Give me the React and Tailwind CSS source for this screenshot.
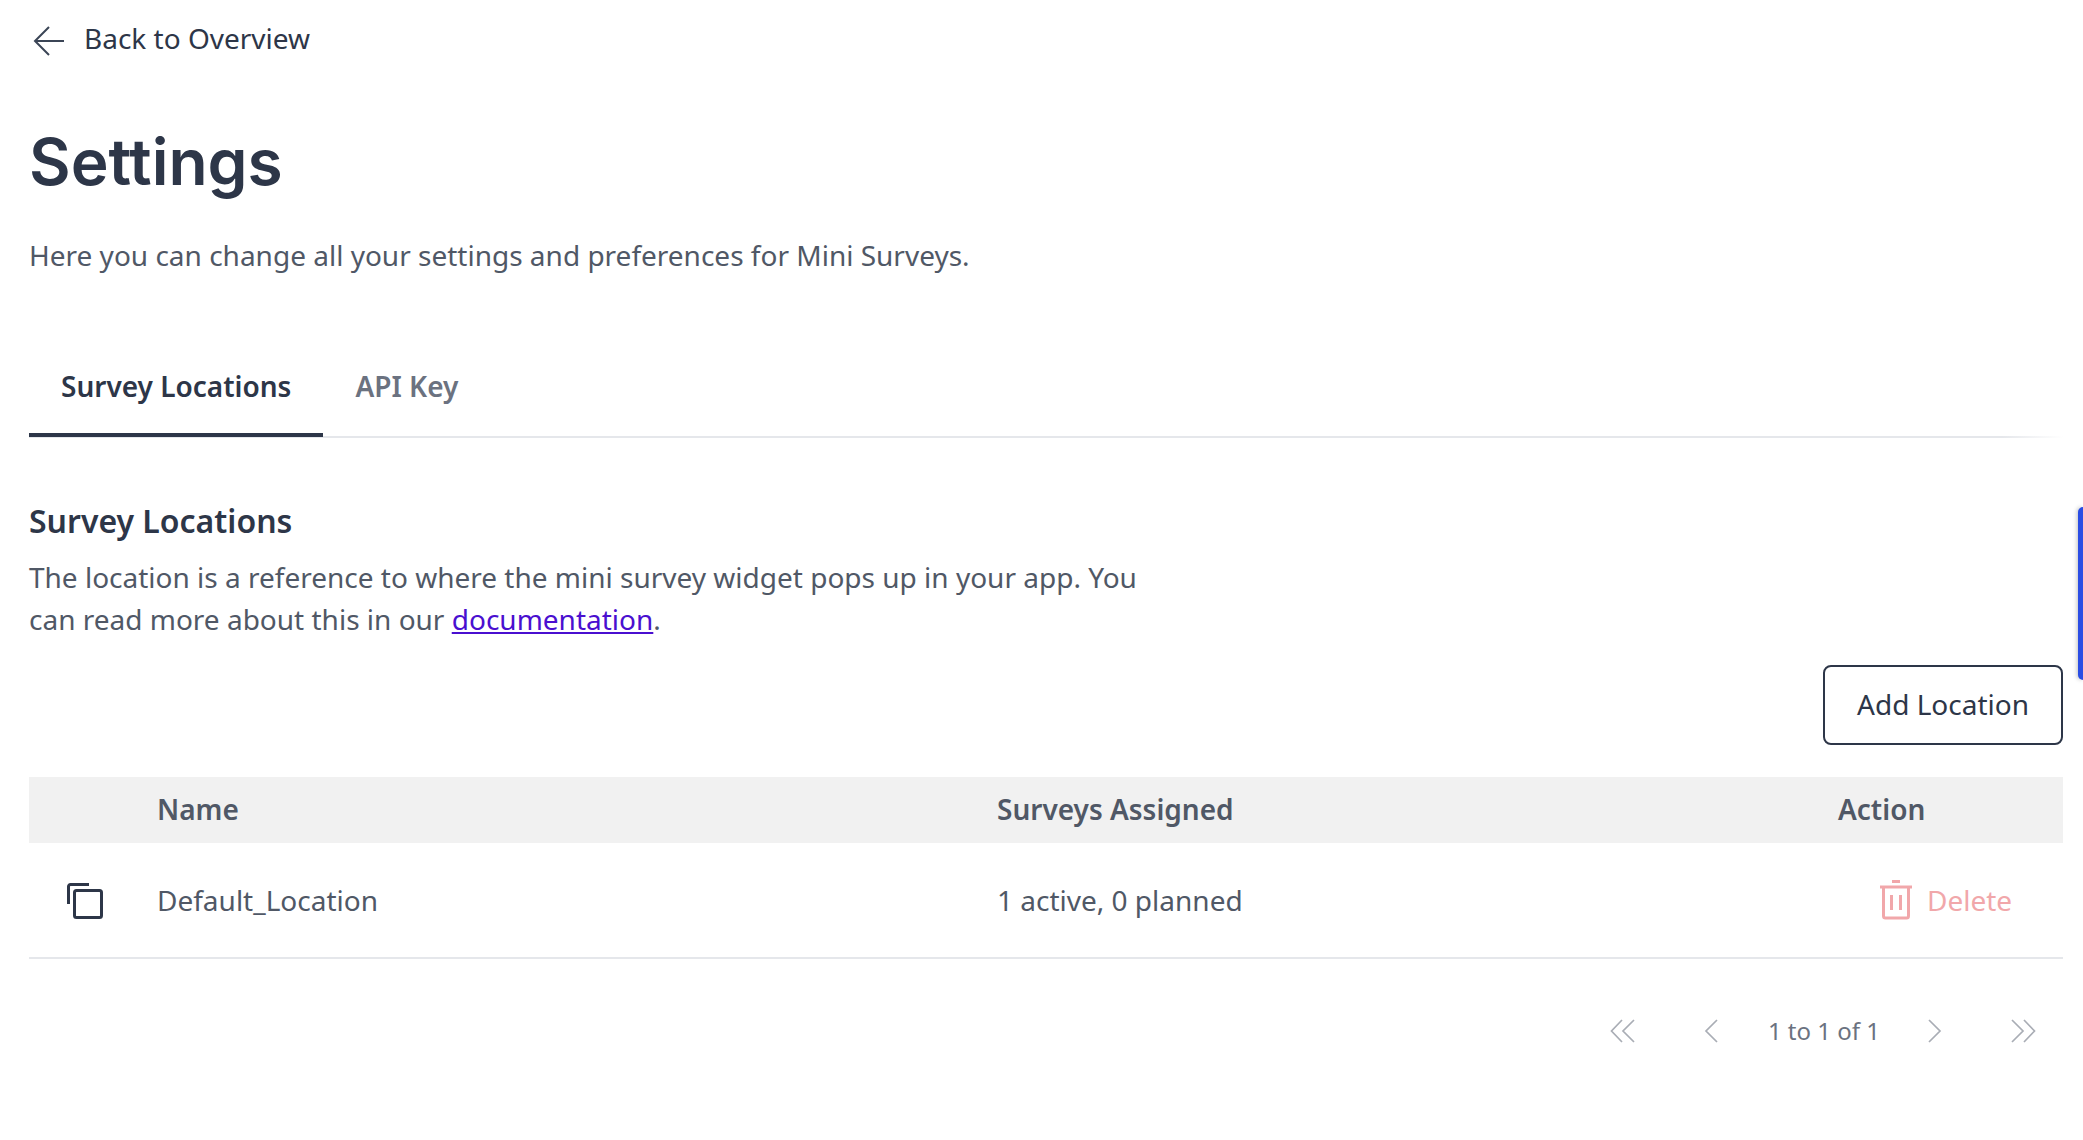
import React from 'react'

function Chevron({ dir = 'left', double = false }) {
    const flip = dir === 'right' ? 'scale-x-[-1]' : ''
    return (
        <svg width="26" height="24" viewBox="0 0 26 24" fill="none" stroke="#a9adb5" strokeWidth="1.7" className={flip}>
            {double ? (
                <>
                    <path d="M12 1 L1.5 12 L12 23" />
                    <path d="M24 1 L13 12 L24 23" />
                </>
            ) : (
                <path d="M18 1 L7 12 L18 23" />
            )}
        </svg>
    )
}

function App() {
    return (
        <div className="relative h-[1140px] overflow-hidden bg-white font-['Noto_Sans',sans-serif] text-[#505866] antialiased">
            <div className="absolute right-0 top-[507px] h-[173px] w-[5px] rounded-l-lg bg-[#2a4de4] shadow-[-1px_0_4px_rgba(0,0,0,0.25)]" />

            <div className="pl-[29px] pr-[20px]">
                <div className="flex h-[78px] items-center gap-[20px] pl-[4px] text-[#2d3648]">
                    <svg width="31" height="30" viewBox="0 0 31 30" fill="none" stroke="#3b4556" strokeWidth="2" className="mt-[3px]">
                        <path d="M16 1 L2 15 L16 29" />
                        <path d="M2 15 H31" />
                    </svg>
                    <span className="mb-[2px] text-[28px] leading-none">Back to Overview</span>
                </div>

                <h1 className="mt-[44px] font-['Inter',sans-serif] text-[64px] font-semibold leading-[80px] text-[#2d3648]">Settings</h1>
                <p className="mt-[35px] text-[28px] leading-[36px]">
                    Here you can change all your settings and preferences for Mini Surveys.
                </p>

                <div className="mt-[81px] flex">
                    <div className="relative z-10 border-b-4 border-[#2d3648] px-[32px] pb-[29px] pt-[14px] text-[28px] font-semibold leading-[36px] text-[#2d3648]">
                        Survey Locations
                    </div>
                    <div className="px-[32px] pb-[29px] pt-[14px] text-[28px] font-semibold leading-[36px] text-[#6b7280]">
                        API Key
                    </div>
                </div>
                <div className="-mt-[1px] h-[2px] bg-linear-to-r from-[#e5e7eb] from-[97%] to-transparent" />

                <h2 className="mt-[63px] text-[32px] font-semibold leading-[40px] text-[#2d3648]">Survey Locations</h2>
                <p className="mt-[15px] w-[1150px] text-[28px] leading-[42px]">
                    The location is a reference to where the mini survey widget pops up in your app. You can read more about this in our{' '}
                    <a href="#" className="text-[#4a0fd0] underline">documentation</a>.
                </p>

                <div className="mt-[25px] flex justify-end">
                    <button className="h-[80px] w-[240px] rounded-[8px] border-2 border-[#2d3648] pb-[2px] text-[28px] text-[#2d3648]">
                        Add Location
                    </button>
                </div>

                <div className="mt-[32px] grid h-[66px] grid-cols-[128px_840px_841px_1fr] items-center bg-[#f1f1f1] pb-[2px] text-[28px] font-semibold">
                    <div />
                    <div>Name</div>
                    <div>Surveys Assigned</div>
                    <div>Action</div>
                </div>
                <div className="grid h-[116px] grid-cols-[128px_840px_841px_1fr] items-center border-b-2 border-[#e5e7eb] text-[28px]">
                    <div className="pl-[38px]">
                        <svg width="36" height="36" viewBox="0 0 36 36" fill="none" stroke="#2d3648" strokeWidth="3" className="mt-[2px]">
                            <path d="M1.5 21 V3.5 a2 2 0 0 1 2 -2 H22" />
                            <rect x="7.5" y="7.5" width="27" height="27" rx="2" />
                        </svg>
                    </div>
                    <div>Default_Location</div>
                    <div>1 active, 0 planned</div>
                    <div className="flex items-center gap-[14px] pl-[41px] text-[#f1a7aa]">
                        <svg width="34" height="40" viewBox="0 0 34 40" fill="none" stroke="#f1a7aa" strokeWidth="3">
                            <path d="M13 1.5 H21" />
                            <path d="M1 7 H33" />
                            <path d="M4.5 7 V36 a2 2 0 0 0 2 2 H27.5 a2 2 0 0 0 2 -2 V7" />
                            <path d="M12.5 15 V30 M21.5 15 V30" />
                        </svg>
                        <span>Delete</span>
                    </div>
                </div>

                <div className="mt-[54px] flex items-center justify-end pr-[27px] text-[24px] text-[#6b7280]">
                    <Chevron double />
                    <div className="ml-[63px]"><Chevron /></div>
                    <span className="ml-[43px] leading-[36px]">1 to 1 of 1</span>
                    <div className="ml-[41px]"><Chevron dir="right" /></div>
                    <div className="ml-[63px]"><Chevron dir="right" double /></div>
                </div>
            </div>
        </div>
    )
}

export default App
